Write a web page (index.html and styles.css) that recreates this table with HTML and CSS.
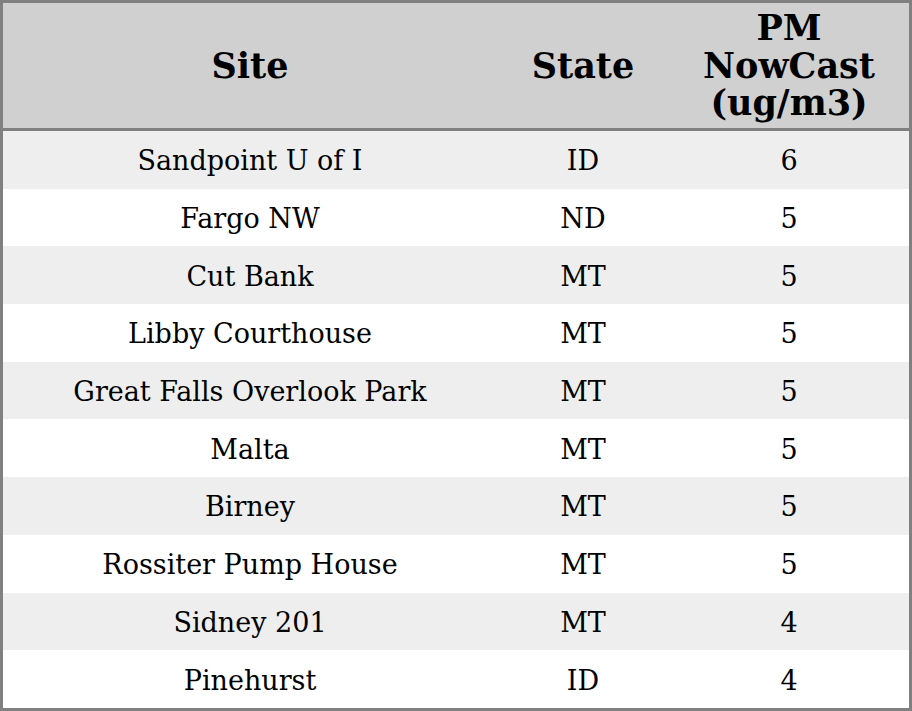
FILE: index.html
```html
<!DOCTYPE html>
<html>
<head>
<meta charset="utf-8">
<link rel="stylesheet" href="styles.css">
</head>
<body>
<table class="aq">
  <colgroup>
    <col class="c-site">
    <col class="c-state">
    <col class="c-pm">
  </colgroup>
  <thead>
    <tr><th>Site</th><th>State</th><th>PM<br>NowCast<br>(ug/m3)</th></tr>
  </thead>
  <tbody>
    <tr><td>Sandpoint U of I</td><td>ID</td><td>6</td></tr>
    <tr><td>Fargo NW</td><td>ND</td><td>5</td></tr>
    <tr><td>Cut Bank</td><td>MT</td><td>5</td></tr>
    <tr><td>Libby Courthouse</td><td>MT</td><td>5</td></tr>
    <tr><td>Great Falls Overlook Park</td><td>MT</td><td>5</td></tr>
    <tr><td>Malta</td><td>MT</td><td>5</td></tr>
    <tr><td>Birney</td><td>MT</td><td>5</td></tr>
    <tr><td>Rossiter Pump House</td><td>MT</td><td>5</td></tr>
    <tr><td>Sidney 201</td><td>MT</td><td>4</td></tr>
    <tr><td>Pinehurst</td><td>ID</td><td>4</td></tr>
  </tbody>
</table>
</body>
</html>
```
FILE: styles.css
```css
html, body {
  margin: 0;
  padding: 0;
  background: #ffffff;
}
.aq {
  width: 912px;
  height: 711px;
  border: 3px solid #808080;
  border-collapse: separate;
  border-spacing: 0;
  table-layout: fixed;
  font-family: "DejaVu Serif", serif;
  color: #000000;
}
.c-site { width: 494px; }
.c-state { width: 172px; }
.c-pm { width: 240px; }
.aq th {
  height: 125px;
  padding: 0;
  background: #d0d0d0;
  border-bottom: 3px solid #808080;
  font-size: 35px;
  font-weight: bold;
  line-height: 37.5px;
  text-align: center;
  vertical-align: middle;
}
.aq td {
  height: 57.7px;
  padding: 3px 0 0;
  box-sizing: border-box;
  font-size: 27px;
  line-height: 32px;
  text-align: center;
  vertical-align: middle;
}
.aq tbody tr:nth-child(odd) td {
  background: #eeeeee;
}
```
